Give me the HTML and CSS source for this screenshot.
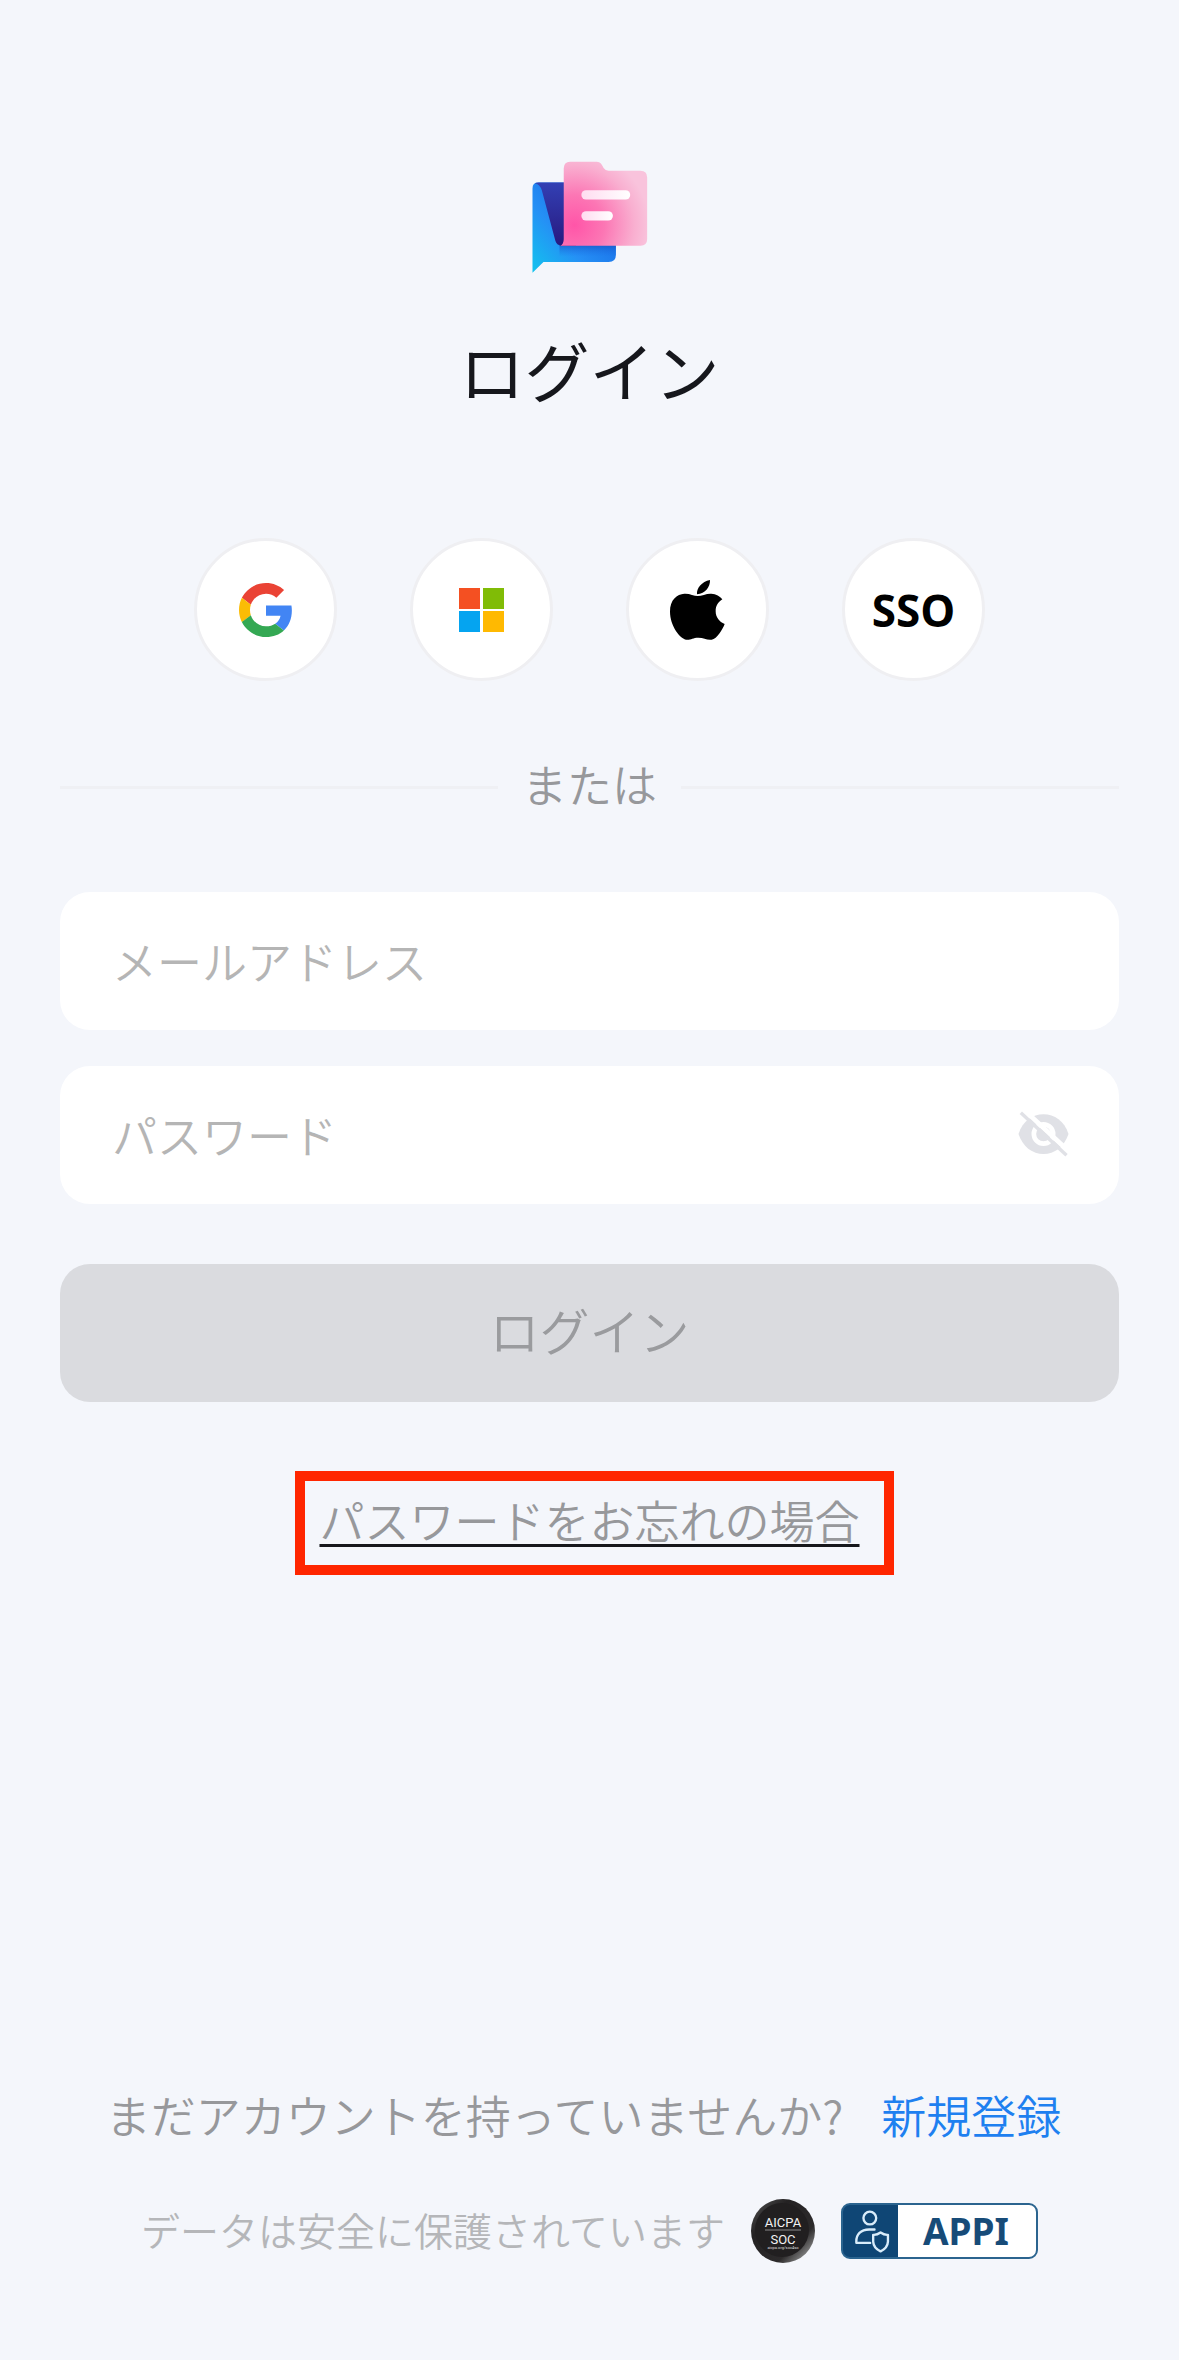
FILE: index.html
```html
<!DOCTYPE html>
<html lang="ja">
<head>
<meta charset="utf-8">
<meta name="viewport" content="width=device-width, initial-scale=1">
<title>ログイン</title>
<link rel="stylesheet" href="styles.css">
</head>
<body>
<div class="page">
  <main class="main">
    <header class="header">
      <svg class="logo" viewBox="95 62 348 340" role="img" aria-label="ロゴ">
        <defs>
          <linearGradient id="bubble" x1="0.75" y1="0.3" x2="0" y2="1"><stop offset="0" stop-color="#1a6fe8"/><stop offset="0.5" stop-color="#2590f5"/><stop offset="1" stop-color="#12c4ee"/></linearGradient>
          <linearGradient id="fold" x1="0" y1="0" x2="0" y2="1"><stop offset="0" stop-color="#3340b4"/><stop offset="1" stop-color="#27197f"/></linearGradient>
          <radialGradient id="folder" gradientUnits="userSpaceOnUse" cx="225" cy="255" r="225"><stop offset="0" stop-color="#ff55a8"/><stop offset="0.4" stop-color="#fc76b4"/><stop offset="0.8" stop-color="#f9afd0"/><stop offset="1" stop-color="#f9c3dc"/></radialGradient>
          <linearGradient id="shade" x1="0" y1="0" x2="0" y2="1"><stop offset="0" stop-color="#1746ad" stop-opacity="0.9"/><stop offset="1" stop-color="#1a6fe8" stop-opacity="0"/></linearGradient>
          <linearGradient id="line" x1="0" y1="0" x2="1" y2="0"><stop offset="0" stop-color="#ffdcf0"/><stop offset="1" stop-color="#fff"/></linearGradient>
        </defs>
        <path d="M116 127H350V344Q350 366 328 366H132L99 398V145Q99 127 116 127Z" fill="url(#bubble)"/>
        <path d="M180 300H350V350H180Z" fill="url(#shade)"/>
        <path d="M106 129Q110 127 118 127H230V317H184Q172 315 168 303L127 150Q121 132 106 129Z" fill="url(#fold)"/>
        <path d="M212 64H292Q302 64 308 74L313 83Q318 91 328 91H424Q444 91 444 111V297Q444 317 424 317H183Q193 313 193 297V84Q193 64 212 64Z" fill="url(#folder)"/>
        <rect x="246" y="150" width="147" height="28" rx="14" fill="url(#line)"/>
        <rect x="246" y="213" width="95" height="28" rx="14" fill="url(#line)"/>
      </svg>
      <h1 class="title">ログイン</h1>
    </header>

    <div class="providers">
      <button class="provider" type="button" aria-label="Google">
        <svg class="icon-google" viewBox="0 0 48 48" aria-hidden="true">
          <path fill="#EA4335" d="M24 9.5c3.54 0 6.71 1.22 9.21 3.6l6.85-6.85C35.9 2.38 30.47 0 24 0 14.62 0 6.51 5.38 2.56 13.22l7.98 6.19C12.43 13.72 17.74 9.5 24 9.5z"/>
          <path fill="#4285F4" d="M46.98 24.55c0-1.57-.15-3.09-.38-4.55H24v9.02h12.94c-.58 2.96-2.26 5.48-4.78 7.18l7.73 6c4.51-4.18 7.09-10.36 7.09-17.65z"/>
          <path fill="#FBBC05" d="M10.53 28.59c-.48-1.45-.76-2.99-.76-4.59s.27-3.14.76-4.59l-7.98-6.19C.92 16.46 0 20.12 0 24s.92 7.54 2.56 10.78l7.97-6.19z"/>
          <path fill="#34A853" d="M24 48c6.48 0 11.93-2.13 15.89-5.81l-7.73-6c-2.15 1.45-4.92 2.3-8.16 2.3-6.26 0-11.57-4.22-13.47-9.91l-7.98 6.19C6.51 42.62 14.62 48 24 48z"/>
        </svg>
      </button>
      <button class="provider" type="button" aria-label="Microsoft">
        <svg class="icon-microsoft" viewBox="0 0 45 44" aria-hidden="true">
          <path fill="#F45022" d="M0 0h21v21H0z"/><path fill="#80BC06" d="M24 0h21v21H24z"/>
          <path fill="#05A4F0" d="M0 23h21v21H0z"/><path fill="#FFB901" d="M24 23h21v21H24z"/>
        </svg>
      </button>
      <button class="provider" type="button" aria-label="Apple">
        <svg class="icon-apple" viewBox="210 180 165 180" aria-hidden="true">
          <path d="M330 180C331 200 316 221 291 223C289 205 305 185 330 180Z"/>
          <path d="M293 228C306 228 319 220 334 221C348 222 360 228 367 238C353 247 347 258 347 274C347 292 358 306 374 312C368 328 351 357 335 359C320 361 312 353 295 353C278 353 271 361 259 359C240 356 210 317 210 275C210 239 231 222 253 221C269 220 282 228 293 228Z"/>
        </svg>
      </button>
      <button class="provider provider-sso" type="button">SSO</button>
    </div>

    <div class="divider"><span class="divider-label">または</span></div>

    <form class="form">
      <input class="field" type="email" placeholder="メールアドレス" aria-label="メールアドレス">
      <div class="field password">
        <input class="password-input" type="password" placeholder="パスワード" aria-label="パスワード">
        <button class="reveal" type="button" aria-label="パスワードを表示">
          <svg class="icon-eye" viewBox="176 216 152 138" aria-hidden="true">
            <path d="M177 285C190 246 219 226 252 226C285 226 314 246 327 285C314 324 285 345 252 345C219 345 190 324 177 285Z" fill="#e0e1e6"/>
            <circle cx="252" cy="285" r="29" fill="none" stroke="#fff" stroke-width="14"/>
            <path d="M192 211L330 339" stroke="#fff" stroke-width="14"/>
            <path d="M184 221L321 349" stroke="#e0e1e6" stroke-width="10"/>
          </svg>
        </button>
      </div>
      <button class="submit" type="submit" disabled>ログイン</button>
    </form>

    <a class="forgot" href="#">パスワードをお忘れの場合</a>
  </main>

  <footer class="footer">
    <p class="signup"><span>まだアカウントを持っていませんか?</span><a class="signup-link" href="#">新規登録</a></p>
    <div class="security">
      <span class="security-text">データは安全に保護されています</span>
      <svg class="badge-soc" viewBox="0 0 64 64" role="img" aria-label="AICPA SOC">
        <defs><linearGradient id="rim" x1="0" y1="0" x2="1" y2="1"><stop offset="0" stop-color="#555"/><stop offset="0.3" stop-color="#242223"/><stop offset="0.7" stop-color="#2c2a2b"/><stop offset="0.85" stop-color="#777"/><stop offset="1" stop-color="#222"/></linearGradient></defs>
        <circle cx="32" cy="32" r="32" fill="url(#rim)"/>
        <circle cx="31" cy="31" r="27" fill="#211f20"/>
        <text class="soc-text" x="32" y="28">AICPA</text>
        <path d="M14 31h36" stroke="#8a8a8a"/>
        <text class="soc-text" x="32" y="45">SOC</text>
        <text class="soc-small" x="32" y="50">aicpa.org/soc4so</text>
      </svg>
      <div class="badge-appi">
        <svg class="icon-person" viewBox="402 94 104 128" aria-hidden="true">
          <g fill="none" stroke="#d9ecfa" stroke-width="7" stroke-linecap="round" stroke-linejoin="round">
            <circle cx="446" cy="118" r="19"/>
            <path d="M447 192H406C404 166 420 152 444 152H460"/>
            <path d="M478 161Q489 169 500 168V188Q499 207 478 217Q457 207 456 188V168Q467 169 478 161Z"/>
          </g>
        </svg>
        <span class="appi-label">APPI</span>
      </div>
    </div>
  </footer>
</div>
</body>
</html>
```
FILE: styles.css
```css
* { box-sizing: border-box; }

body {
  margin: 0;
  background: #f4f6fb;
  color: #16171c;
  font-family: "Noto Sans CJK JP", sans-serif;
  font-weight: 350;
}

button, input {
  margin: 0;
  padding: 0;
  border: 0;
  font: inherit;
}

a { text-decoration: none; }

.page {
  display: flex;
  flex-direction: column;
  justify-content: space-between;
  min-height: 100vh;
  padding: 161px 60px 97px;
}

.main {
  display: flex;
  flex-direction: column;
  align-items: center;
}

.header {
  display: flex;
  flex-direction: column;
  align-items: center;
  gap: 47px;
}

.logo { width: 116px; height: 113px; overflow: visible; }

.title {
  margin: 0;
  font-size: 65px;
  font-weight: 400;
  line-height: 96px;
}

.providers {
  display: flex;
  gap: 73px;
  margin-top: 121px;
}

.provider {
  display: flex;
  align-items: center;
  justify-content: center;
  width: 143px;
  height: 143px;
  border: 3px solid #efeff2;
  border-radius: 50%;
  background: #fff;
  color: #000;
}

.provider-sso {
  font-family: "Open Sans", sans-serif;
  font-size: 44px;
  font-weight: 700;
}

.icon-google { width: 54px; height: 54px; }
.icon-microsoft { width: 45px; height: 44px; }
.icon-apple { width: 55px; height: 60px; }

.divider {
  display: flex;
  align-items: center;
  gap: 24px;
  align-self: stretch;
  margin-top: 73px;
  color: #97989b;
  font-size: 45px;
  line-height: 60px;
}

.divider::before,
.divider::after {
  content: "";
  flex: 1;
  height: 3px;
  background: #eff0f4;
}

.divider-label { padding-bottom: 6px; }

.form {
  display: flex;
  flex-direction: column;
  align-self: stretch;
  gap: 36px;
  margin-top: 72px;
}

.field {
  width: 100%;
  height: 138px;
  padding: 0 50px 2px 52px;
  border-radius: 30px;
  background: #fff;
  font-size: 45px;
}

.password {
  display: flex;
  align-items: center;
}

.password-input {
  flex: 1;
  min-width: 0;
  height: 100%;
  background: none;
}

.field::placeholder,
.password-input::placeholder { color: #b5b5b5; opacity: 1; }

.reveal { display: flex; background: none; }
.icon-eye { width: 51px; height: 46px; }

.submit {
  height: 138px;
  margin-top: 24px;
  padding-bottom: 8px;
  border-radius: 30px;
  background: #dadbdf;
  color: #9a9b9e;
  font-size: 50px;
}

.forgot {
  position: relative;
  margin-top: 85px;
  color: #97989b;
  font-size: 45px;
  line-height: 66px;
  text-decoration: underline 3px #16171c;
  text-underline-offset: 5px;
  text-decoration-skip-ink: none;
}

/* Highlight frame around the reset link */
.forgot::after {
  content: "";
  position: absolute;
  inset: -16px -34px -22px -24px;
  border: 10px solid #ff2600;
}

.footer {
  display: flex;
  flex-direction: column;
  align-items: center;
  gap: 51px;
}

.signup {
  display: flex;
  gap: 38px;
  margin: 0;
  padding-right: 12px;
  color: #97989b;
  font-size: 45px;
  line-height: 66px;
}

.signup-link { color: #1e80f0; }

.security {
  display: flex;
  align-items: center;
  gap: 26px;
  color: #b5b6b9;
  font-size: 39px;
  line-height: 60px;
}

.security-text { padding-bottom: 4px; }

.badge-soc { width: 64px; height: 64px; }

.soc-text {
  fill: #f2f2f2;
  font: 400 13px Roboto, sans-serif;
  text-anchor: middle;
}

.soc-small {
  fill: #ddd;
  font: 400 4px Roboto, sans-serif;
  text-anchor: middle;
}

.badge-appi {
  display: flex;
  align-items: center;
  width: 197px;
  height: 56px;
  padding-left: 12px;
  border: 2px solid #2b648f;
  border-radius: 9px;
  background: linear-gradient(90deg, #0f4675 55px, #fff 55px);
}

.icon-person { width: 35px; height: 43px; }

.appi-label {
  flex: 1;
  padding-left: 6px;
  color: #174b78;
  font-family: "Noto Sans", sans-serif;
  font-size: 37px;
  font-weight: 700;
  text-align: center;
}
```
